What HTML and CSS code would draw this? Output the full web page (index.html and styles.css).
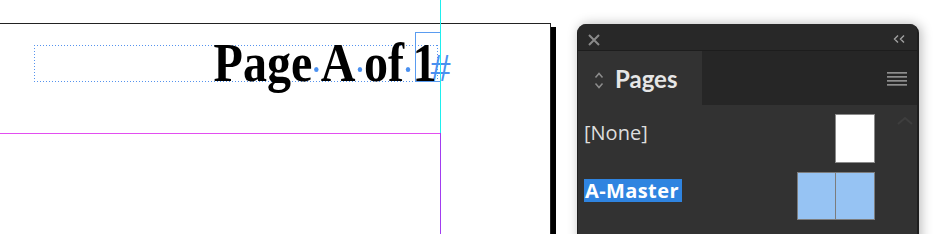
FILE: index.html
```html
<!DOCTYPE html>
<html>
<head>
<meta charset="utf-8">
<link rel="stylesheet" href="styles.css">
</head>
<body>
<div class="stage">
  <div class="canvas">
    <div class="page">
      <div class="frame"><span class="story"><span class="txt">Page<span class="sp"> </span>A<span class="sp"> </span>of<span class="sp"> </span>1</span><span class="eos">#</span></span></div>
      <div class="charbox"></div>
    </div>
    <div class="guide g-cyan"></div>
    <div class="guide g-purple"></div>
    <div class="guide g-magenta"></div>
  </div>
  <div class="panel">
    <div class="titlebar">
      <svg class="ic-close" width="12" height="12" viewBox="0 0 12 12"><path d="M1 1L11 11M11 1L1 11" stroke="#8a8a8a" stroke-width="2" fill="none"/></svg>
      <svg class="ic-collapse" width="12" height="8" viewBox="0 0 12 8"><path d="M5 0.5L1.5 4L5 7.5M11 0.5L7.5 4L11 7.5" stroke="#a0a0a0" stroke-width="1.4" fill="none"/></svg>
    </div>
    <div class="tabbar">
      <div class="tab">
        <svg class="ic-updown" width="10" height="17" viewBox="0 0 10 17"><path d="M1.5 5.5L5 1.5L8.5 5.5M1.5 11.5L5 15.5L8.5 11.5" stroke="#8c8c8c" stroke-width="1.5" fill="none"/></svg>
        <span class="tab-label">Pages</span>
      </div>
      <div class="tabrest">
        <svg class="ic-menu" width="20" height="14" viewBox="0 0 20 14"><rect x="0" y="0" width="20" height="1.7" fill="#8e8e8e"/><rect x="0" y="4" width="20" height="1.7" fill="#8e8e8e"/><rect x="0" y="8" width="20" height="1.7" fill="#8e8e8e"/><rect x="0" y="12" width="20" height="1.7" fill="#8e8e8e"/></svg>
      </div>
    </div>
    <div class="content">
      <div class="row r1">
        <span class="name">[None]</span>
        <div class="thumb"></div>
      </div>
      <div class="row r2">
        <span class="name sel">A-Master</span>
        <div class="spread"><div class="pg left"></div><div class="pg"></div></div>
      </div>
      <svg class="scroll-up" width="16" height="8" viewBox="0 0 16 8"><path d="M1 7L8 1L15 7" stroke="#3e3e3e" stroke-width="2" fill="none"/></svg>
    </div>
  </div>
</div>
</body>
</html>
```
FILE: styles.css
```css
html, body {
  margin: 0;
  padding: 0;
  background: #ffffff;
  overflow: hidden;
}
.stage {
  display: flex;
  width: 936px;
  height: 234px;
  overflow: hidden;
}
.canvas {
  position: relative;
  width: 577px;
  flex: 0 0 577px;
  height: 234px;
  overflow: hidden;
}
.page {
  position: relative;
  margin-top: 23px;
  width: 550px;
  height: 300px;
  background: #ffffff;
  border-top: 1px solid #222222;
  border-right: 1px solid #222222;
  box-shadow: 5px 4px 0 #000000;
}
.frame {
  box-sizing: border-box;
  margin-left: 34px;
  margin-top: 21px;
  width: 404px;
  height: 37px;
  padding: 1px 2px 1px 1px;
  text-align: right;
  white-space: nowrap;
  background:
    linear-gradient(to right, #5593ee 1px, transparent 1px) left top / 3px 1px repeat-x,
    linear-gradient(to right, #5593ee 1px, transparent 1px) left bottom / 3px 1px repeat-x,
    linear-gradient(to bottom, #5593ee 1px, transparent 1px) left top / 1px 3px repeat-y,
    linear-gradient(to bottom, #5593ee 1px, transparent 1px) right top / 1px 3px repeat-y;
}
.story {
  font-family: "Liberation Serif", serif;
  font-weight: bold;
  font-size: 54px;
  line-height: 35px;
  color: #000000;
}
.txt {
  display: inline-block;
  transform: scaleX(0.89);
  transform-origin: right bottom;
}
.sp {
  position: relative;
  letter-spacing: -4px;
}
.sp::after {
  content: "";
  position: absolute;
  width: 5px;
  height: 5px;
  border-radius: 50%;
  background: #4a90f0;
  left: calc(50% - 2.5px);
  top: 34px;
}
.eos {
  font-family: "Liberation Sans", sans-serif;
  font-weight: normal;
  font-style: italic;
  font-size: 36px;
  color: #4a90f0;
  margin-left: -6px;
  margin-right: -14px;
}
.charbox {
  position: absolute;
  box-sizing: border-box;
  left: 415px;
  top: 8px;
  width: 26px;
  height: 50px;
  border: 1px solid #5a9cf0;
}
.guide {
  position: absolute;
}
.g-cyan {
  left: 440px;
  top: 0;
  width: 1px;
  height: 133px;
  background: #1eeeee;
}
.g-purple {
  left: 440px;
  top: 133px;
  width: 1px;
  height: 101px;
  background: #a23cf0;
}
.g-magenta {
  left: 0;
  top: 133px;
  width: 440px;
  height: 1px;
  background: #e24ef0;
}
.panel {
  box-sizing: border-box;
  flex: 0 0 342px;
  width: 342px;
  height: 230px;
  margin-top: 24px;
  background: #323232;
  border-left: 1px solid #1f1f1f;
  border-right: 2px solid #1f1f1f;
  border-radius: 9px 9px 0 0;
  box-shadow: 2px 0 12px rgba(0, 0, 0, 0.28);
  overflow: hidden;
}
.titlebar {
  display: flex;
  justify-content: space-between;
  align-items: flex-start;
  height: 26px;
  background: #282828;
  border-bottom: 1px solid #1d1d1d;
  padding: 0 12px 0 10px;
}
.ic-close {
  margin-top: 10px;
}
.ic-collapse {
  margin-top: 11px;
}
.tabbar {
  display: flex;
  height: 54px;
  background: #262626;
}
.tab {
  display: flex;
  align-items: flex-start;
  width: 124px;
  background: #323232;
  padding-left: 16px;
  box-sizing: border-box;
}
.ic-updown {
  margin-top: 21px;
}
.tab-label {
  margin-left: 11px;
  margin-top: 16px;
  font-family: "Lato", sans-serif;
  font-weight: bold;
  font-size: 24px;
  line-height: 24px;
  color: #e6e6e6;
}
.tabrest {
  flex: 1;
  display: flex;
  justify-content: flex-end;
  align-items: flex-start;
  padding-right: 10px;
}
.ic-menu {
  margin-top: 21px;
}
.content {
  position: relative;
  height: 150px;
  background: #323232;
}
.row {
  display: flex;
  justify-content: space-between;
  align-items: flex-start;
  padding-right: 42px;
}
.r1 {
  height: 58px;
  padding-left: 6px;
}
.r2 {
  padding-left: 6px;
}
.name {
  font-family: "Open Sans", sans-serif;
  font-size: 20px;
  line-height: 22px;
  color: #dedede;
  margin-top: 17px;
}
.name.sel {
  font-weight: bold;
  color: #ffffff;
  background: #2f84e0;
  line-height: 23px;
  margin-top: 16px;
  letter-spacing: 0.4px;
  padding: 0 3px 0 1px;
}
.thumb {
  box-sizing: border-box;
  margin-top: 9px;
  width: 40px;
  height: 49px;
  background: #ffffff;
  border: 1px solid #8a8a8a;
}
.spread {
  box-sizing: border-box;
  display: flex;
  margin-top: 9px;
  width: 78px;
  height: 48px;
  background: #96c3f3;
  border: 1px solid #7c7c7c;
}
.pg {
  flex: 1;
}
.pg.left {
  flex: 0 0 37px;
  border-right: 1px solid #7c7c7c;
}
.scroll-up {
  position: absolute;
  left: 319px;
  top: 12px;
}
```
